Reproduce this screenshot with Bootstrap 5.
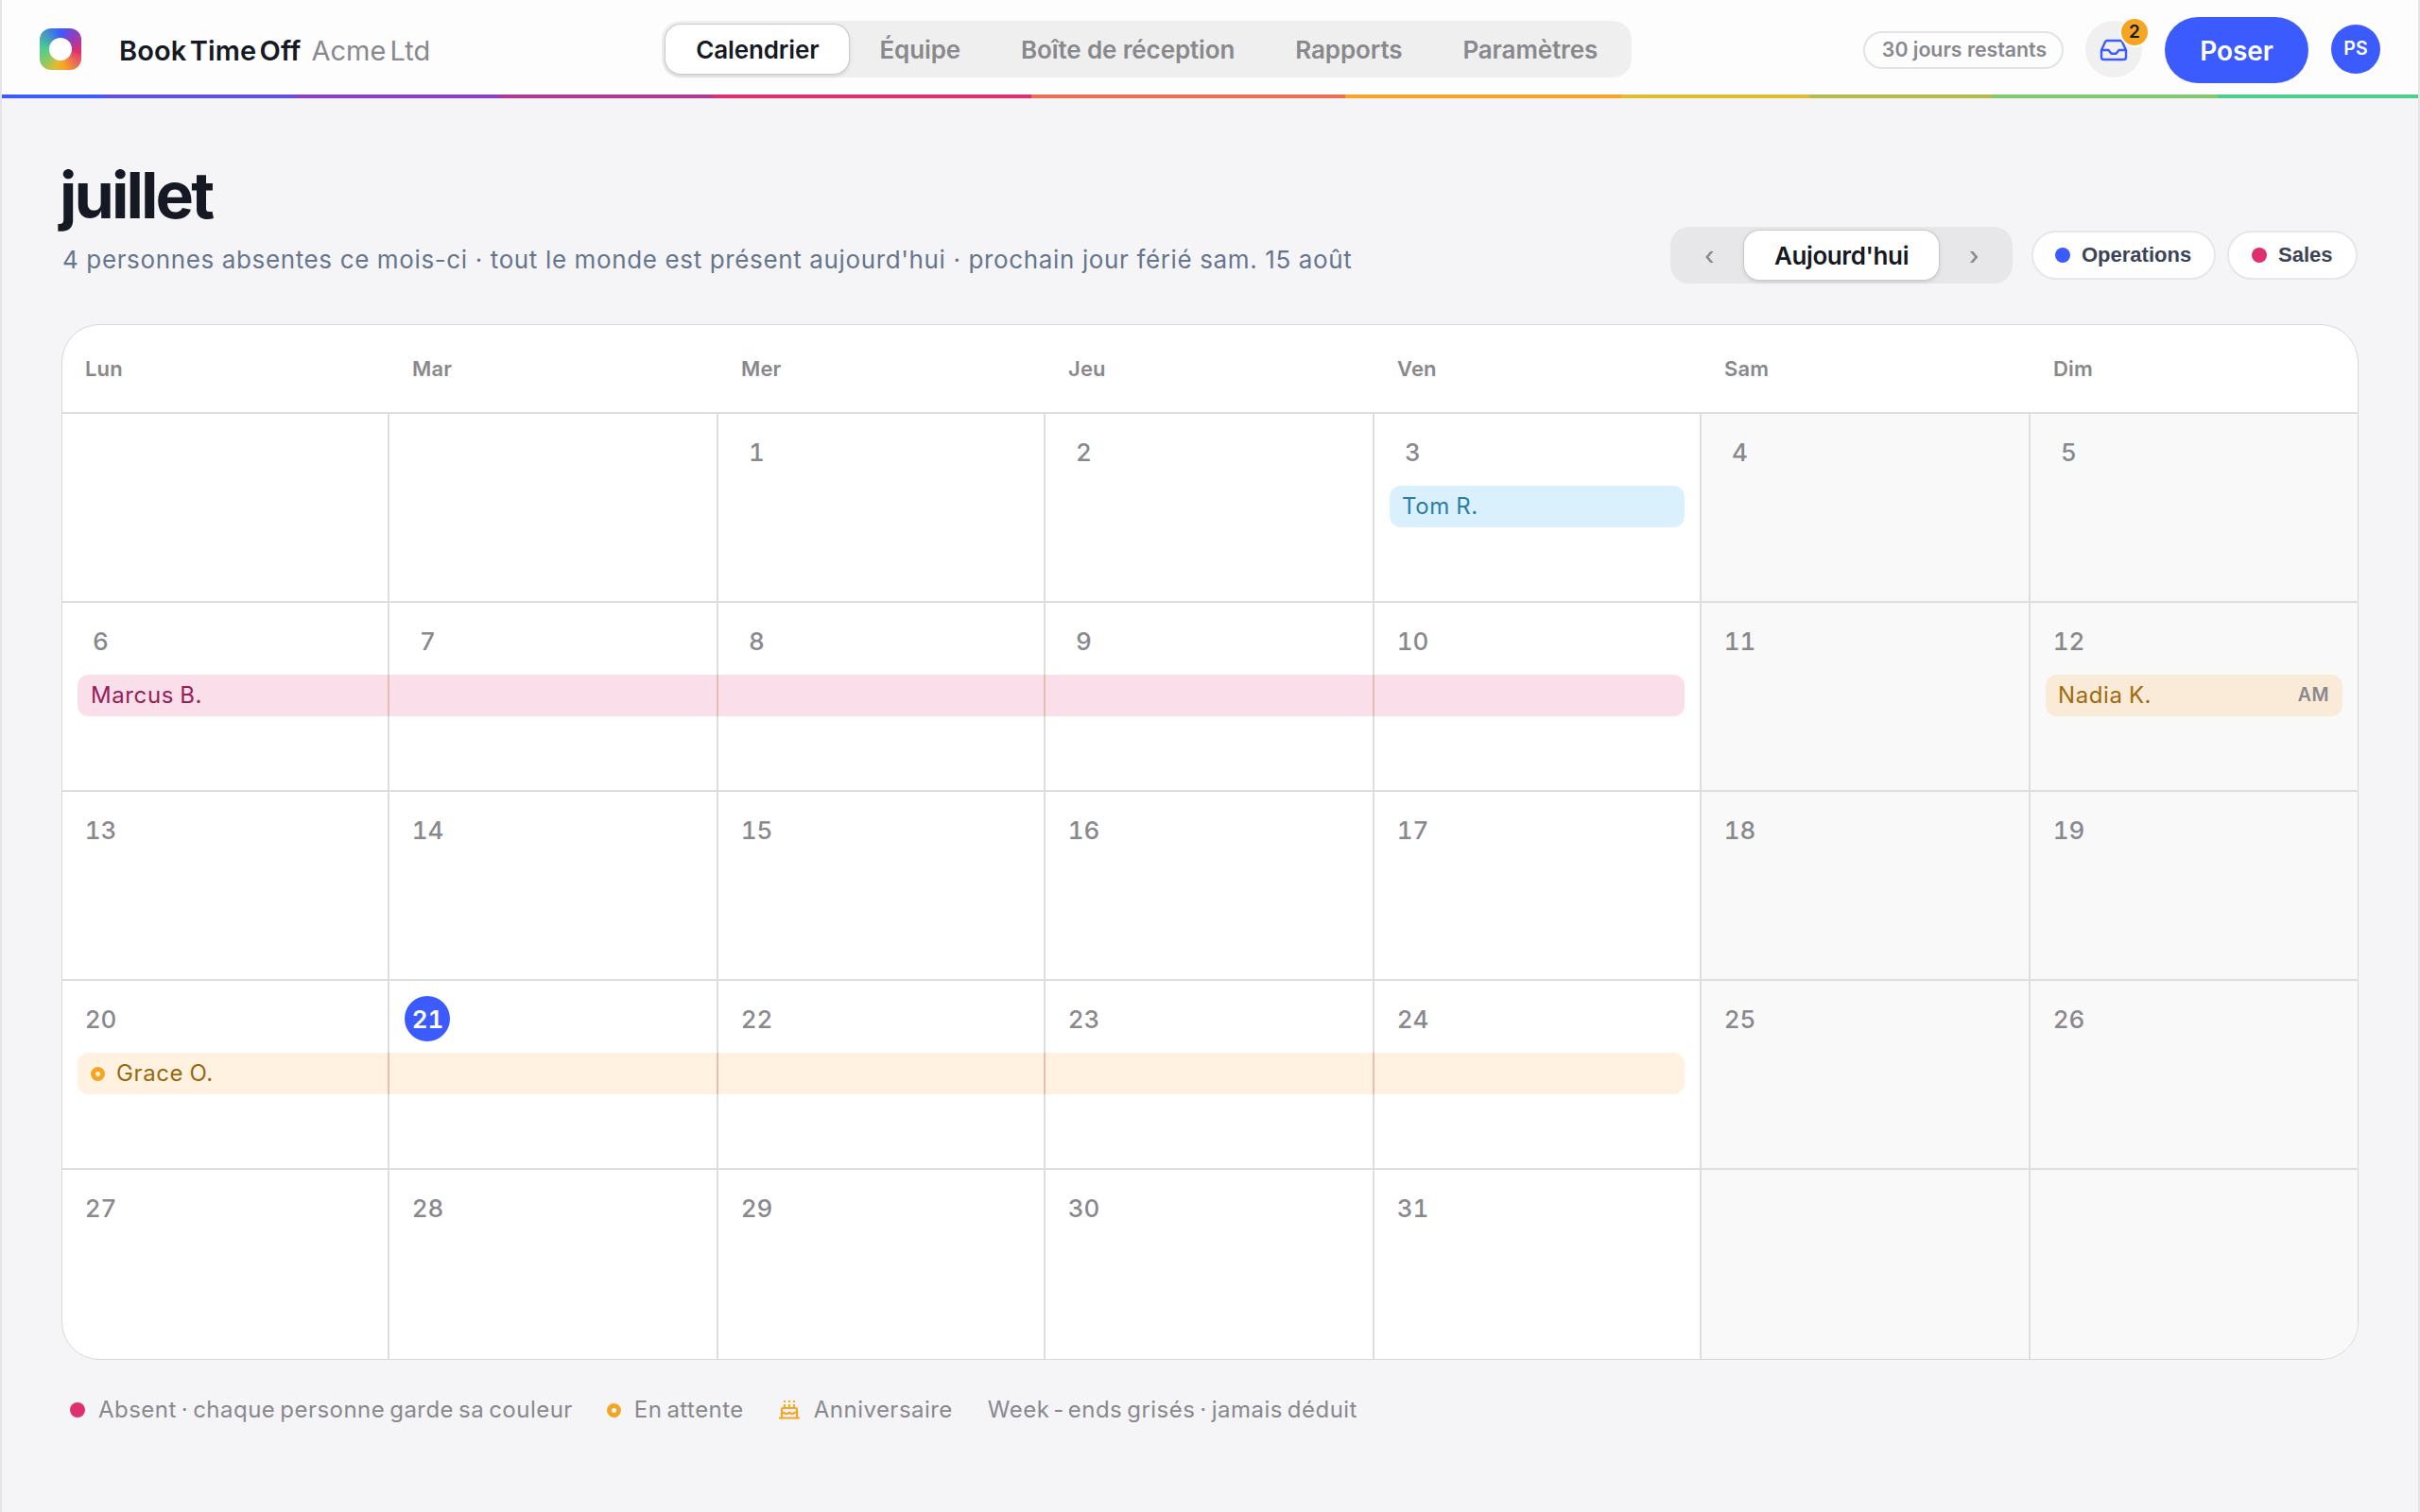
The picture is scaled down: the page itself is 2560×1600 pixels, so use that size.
<!DOCTYPE html>
<html lang="fr">
<head>
<meta charset="utf-8">
<meta name="viewport" content="width=device-width, initial-scale=1">
<title>BookTimeOff</title>
<link href="https://cdn.jsdelivr.net/npm/bootstrap@5.3.0/dist/css/bootstrap.min.css" rel="stylesheet">
<style>
:root{--ink:#151924;--muted-ink:#88888d;--brand:#3b5bff;--rule:#dedede;--pink:#de3070;--amber:#f5a524}
html,body{height:100%}
body{font-family:Inter,"Liberation Sans",sans-serif;background:#f5f5f8;color:var(--ink);font-size:26px;line-height:1.4}
.shell{width:2560px;height:1600px;border-left:2px solid #e5e5e8;border-right:2px solid #e5e5e8;overflow:hidden}
.topbar{height:100px;background:#fdfdfd;padding:4px 40px 0 40px}
.spectrum{height:4px;background:linear-gradient(90deg,#3b5bff 0 4.2%,#5f4fe0 4.2% 12.1%,#8a41c0 12.1% 20.6%,#b13795 20.6% 29.4%,#de3070 29.4% 42.6%,#ec6f55 42.6% 55.6%,#f5a524 55.6% 67%,#dfbd33 67% 74.8%,#b4bc50 74.8% 82.4%,#80c96c 82.4% 91.7%,#4bcf8d 91.7%)}
.logo{width:44px;height:44px;border-radius:12px;background:conic-gradient(#3b5bff,#8a41c0 12%,#de3070 27%,#ec6f55 37%,#f5a524 47%,#dfbd33 54%,#80c96c 66%,#4bcf8d 76%,#3b5bff)}
.logo i{width:24px;height:24px;background:#fff}
.brand{font-size:29px;font-weight:600;letter-spacing:.1px;word-spacing:-4px;margin-left:40px;padding-top:4px}
.org{font-size:29px;color:var(--muted-ink);letter-spacing:0;word-spacing:-4px;margin-left:11px;padding-top:4px}
.seg{background:#efefef;border-radius:20px;padding:4px}
.seg a{font-size:26px;font-weight:600;letter-spacing:-.12px;color:var(--muted-ink);text-decoration:none;border-radius:16px;height:52px;padding:2px 32px 0;display:flex;align-items:center;justify-content:center}
.seg a.on{background:#fff;color:var(--ink);box-shadow:0 0 0 1px #c9c9ce,0 2px 5px rgba(0,0,0,.14)}
.quota{border:2px solid #e3e3e5;border-radius:20px;height:40px;width:212px;padding-left:2px;font-size:21.3px;font-weight:600;color:var(--muted-ink);position:relative;top:1px}
.inbox{width:60px;height:60px;background:#f0f0f0;position:relative;margin-left:23px;padding:2px 0 0 1px}
.inbox b{position:absolute;left:36px;top:-4px;width:32px;height:32px;background:var(--amber);border:2px solid #fdfdfd;font-size:19px;font-weight:600}
.cta{background:var(--brand);color:#fff;width:152px;height:70px;border-radius:35px;padding-top:3px;font-size:28px;font-weight:600;letter-spacing:-.1px;margin-left:24px;position:relative;top:1px}
.me{background:var(--brand);color:#fff;width:52px;height:52px;font-size:19.5px;font-weight:600;margin-left:24px}
.main{padding:0 63px}
h1{font-size:68px;font-weight:700;letter-spacing:-2.9px;line-height:80px;margin:62px 0 0 -2px}
.sub{font-size:26px;line-height:40px;color:#66758c;letter-spacing:.63px;margin:9px 0 5px 1px}
.day-seg{background:#e7e7ea}
.day-seg a{width:206px;padding:2px 0 0;letter-spacing:-.4px}
.day-seg a.arrow{width:74px;font-weight:500}
.tag{background:#fff;border:2px solid #e5e7eb;border-radius:26px;height:52px;padding:0 0 0 23px;gap:12px;font:700 22px/1 "Liberation Sans",sans-serif;color:#3b4456}
.tag-ops{width:195px;margin-left:20px}
.tag-sales{width:138px;padding-left:24px;margin:0 1px 0 12px}
.dot{width:16px;height:16px;border-radius:50%;display:block}
.ring{width:15px;height:15px;border-radius:50%;border:5px solid var(--amber);display:block}
.cal{margin-top:43px;border:1px solid #d8d8dc;border-radius:40px;background:#fff;overflow:hidden;width:2430px;height:1096px}
.week,.dow{display:grid;grid-template-columns:346px 348px 346px 348px 346px 348px 346px}
.dow{height:92px;font-size:22px;font-weight:600;letter-spacing:.15px;color:var(--muted-ink);align-items:center}
.dow span{padding-left:24px}
.week{height:200px;border-top:2px solid var(--rule);grid-template-rows:100%}
.week:last-child{height:202px}
.day{grid-row:1;border-right:2px solid var(--rule);padding:16px 0 0 16px}
.day:nth-child(1){grid-column:1}
.day:nth-child(2){grid-column:2}
.day:nth-child(3){grid-column:3}
.day:nth-child(4){grid-column:4}
.day:nth-child(5){grid-column:5}
.day:nth-child(6){grid-column:6}
.day:nth-child(7){grid-column:7;border-right:0}
.day:nth-child(6),.day:nth-child(7){background:#f9f9f9}
.num{width:48px;height:48px;display:flex;align-items:center;justify-content:center;border-radius:50%;padding:2px 0 0 1px;font-size:26px;font-weight:500;font-variant-numeric:tabular-nums;color:var(--muted-ink)}
.today{background:var(--brand);color:#fff;font-weight:600}
.ev{grid-row:1;align-self:start;margin:76px 18px 0 16px;padding:0 14px;height:44px;border-radius:12px;font-size:24px;letter-spacing:.6px;word-spacing:-1px;display:flex;align-items:center}
.ev.fri{grid-column:5;padding-left:13px;background:#daf0fc;color:#2b7ea3}
.ev.sun{grid-column:7;margin-right:16px;padding-left:13px;background:#f9ebd7;color:#a06a0e}
.ev.span5{grid-column:1/6;--seam:#e4bdb4;background-image:linear-gradient(90deg,transparent 328px,var(--seam) 328px 330px,transparent 330px 676px,var(--seam) 676px 678px,transparent 678px 1022px,var(--seam) 1022px 1024px,transparent 1024px 1370px,var(--seam) 1370px 1372px,transparent 1372px)}
.pinkbar{background-color:#fadee9;color:#94205a}
.amberbar{background-color:#fff2e0;color:#98670e}
.half{font-size:19.5px;font-weight:600;color:var(--muted-ink);letter-spacing:.6px}
.legend{margin:33px 0 0 9px;font-size:24px;letter-spacing:.47px;word-spacing:-2.2px;color:var(--muted-ink);line-height:40px}
.hy{margin:0 4px}
</style>
</head>
<body>
<div class="shell">
<header class="topbar d-flex align-items-center justify-content-between">
  <div class="d-flex align-items-center">
    <span class="logo d-flex align-items-center justify-content-center"><i class="rounded-circle"></i></span>
    <span class="brand">Book Time Off</span><span class="org">Acme Ltd</span>
  </div>
  <nav class="seg d-flex">
    <a class="on" href="#">Calendrier</a><a href="#">Équipe</a><a href="#">Boîte de réception</a><a href="#">Rapports</a><a href="#">Paramètres</a>
  </nav>
  <div class="d-flex align-items-center">
    <span class="quota d-flex align-items-center justify-content-center">30 jours restants</span>
    <span class="inbox rounded-circle d-flex align-items-center justify-content-center">
      <svg width="30" height="24" viewBox="0 0 30 24" fill="none" stroke="#3b5bff" stroke-width="2.4" stroke-linejoin="round" stroke-linecap="round"><path d="M2 12 6.2 3Q6.7 2 8 2h14q1.300 0 1.800 1L28 12v7.500q0 2.500-2.500 2.500h-21Q2 22 2 19.500zM2 12h7.500l3 3.800h5l3-3.800H28"/></svg>
      <b class="rounded-circle d-flex align-items-center justify-content-center">2</b>
    </span>
    <span class="cta d-flex align-items-center justify-content-center">Poser</span>
    <span class="me rounded-circle d-flex align-items-center justify-content-center">PS</span>
  </div>
</header>
<div class="spectrum"></div>
<main class="main">
  <div class="d-flex justify-content-between align-items-end">
    <div><h1>juillet</h1><p class="sub">4 personnes absentes ce mois-ci · tout le monde est présent aujourd'hui · prochain jour férié sam. 15 août</p></div>
    <div class="d-flex align-items-center">
      <div class="seg day-seg d-flex"><a class="arrow" href="#">‹</a><a class="on" href="#">Aujourd'hui</a><a class="arrow" href="#">›</a></div>
      <span class="tag tag-ops d-flex align-items-center"><i class="dot" style="background:#3b5bff"></i>Operations</span>
      <span class="tag tag-sales d-flex align-items-center"><i class="dot" style="background:#de3070"></i>Sales</span>
    </div>
  </div>
  <section class="cal">
    <div class="dow"><span>Lun</span><span>Mar</span><span>Mer</span><span>Jeu</span><span>Ven</span><span>Sam</span><span>Dim</span></div>
    <div class="week">
      <div class="day"></div><div class="day"></div><div class="day"><span class="num">1</span></div><div class="day"><span class="num">2</span></div><div class="day"><span class="num">3</span></div><div class="day"><span class="num">4</span></div><div class="day"><span class="num">5</span></div>
      <div class="ev fri">Tom R.</div>
    </div>
    <div class="week">
      <div class="day"><span class="num">6</span></div><div class="day"><span class="num">7</span></div><div class="day"><span class="num">8</span></div><div class="day"><span class="num">9</span></div><div class="day"><span class="num">10</span></div><div class="day"><span class="num">11</span></div><div class="day"><span class="num">12</span></div>
      <div class="ev span5 pinkbar">Marcus B.</div>
      <div class="ev sun justify-content-between">Nadia K.<span class="half">AM</span></div>
    </div>
    <div class="week">
      <div class="day"><span class="num">13</span></div><div class="day"><span class="num">14</span></div><div class="day"><span class="num">15</span></div><div class="day"><span class="num">16</span></div><div class="day"><span class="num">17</span></div><div class="day"><span class="num">18</span></div><div class="day"><span class="num">19</span></div>
    </div>
    <div class="week">
      <div class="day"><span class="num">20</span></div><div class="day"><span class="num today">21</span></div><div class="day"><span class="num">22</span></div><div class="day"><span class="num">23</span></div><div class="day"><span class="num">24</span></div><div class="day"><span class="num">25</span></div><div class="day"><span class="num">26</span></div>
      <div class="ev span5 amberbar"><i class="ring me-2"></i><span class="ms-1">Grace O.</span></div>
    </div>
    <div class="week">
      <div class="day"><span class="num">27</span></div><div class="day"><span class="num">28</span></div><div class="day"><span class="num">29</span></div><div class="day"><span class="num">30</span></div><div class="day"><span class="num">31</span></div><div class="day"></div><div class="day"></div>
    </div>
  </section>
  <div class="legend d-flex align-items-center">
    <i class="dot" style="background:#de3070"></i><span style="margin-left:14px">Absent · chaque personne garde sa couleur</span>
    <i class="ring" style="margin-left:36px"></i><span style="margin-left:14px">En attente</span>
    <svg style="margin-left:37px" width="22" height="20" viewBox="0 0 22 20" fill="none" stroke="#f5a524" stroke-width="2.200"><path d="M0 18.500h22M3 18V9.500Q3 8 4.500 8h13Q19 8 19 9.500V18M3 12.500q2 0 3.500 1.200 1.500 1 3 0 1.500-1.400 3 0 1.500 1 3 0Q17 12.500 19 12.500"/><path stroke="#e9b02b" d="M6 0v2M11 0v2M16 0v2M6 4v3.500M11 4v3.500M16 4v3.500"/></svg><span style="margin-left:15px">Anniversaire</span>
    <span style="margin-left:37px">Week<span class="hy">-</span>ends grisés · jamais déduit</span>
  </div>
</main>
</div>
<script src="https://cdn.jsdelivr.net/npm/bootstrap@5.3.0/dist/js/bootstrap.bundle.min.js"></script>
</body>
</html>
